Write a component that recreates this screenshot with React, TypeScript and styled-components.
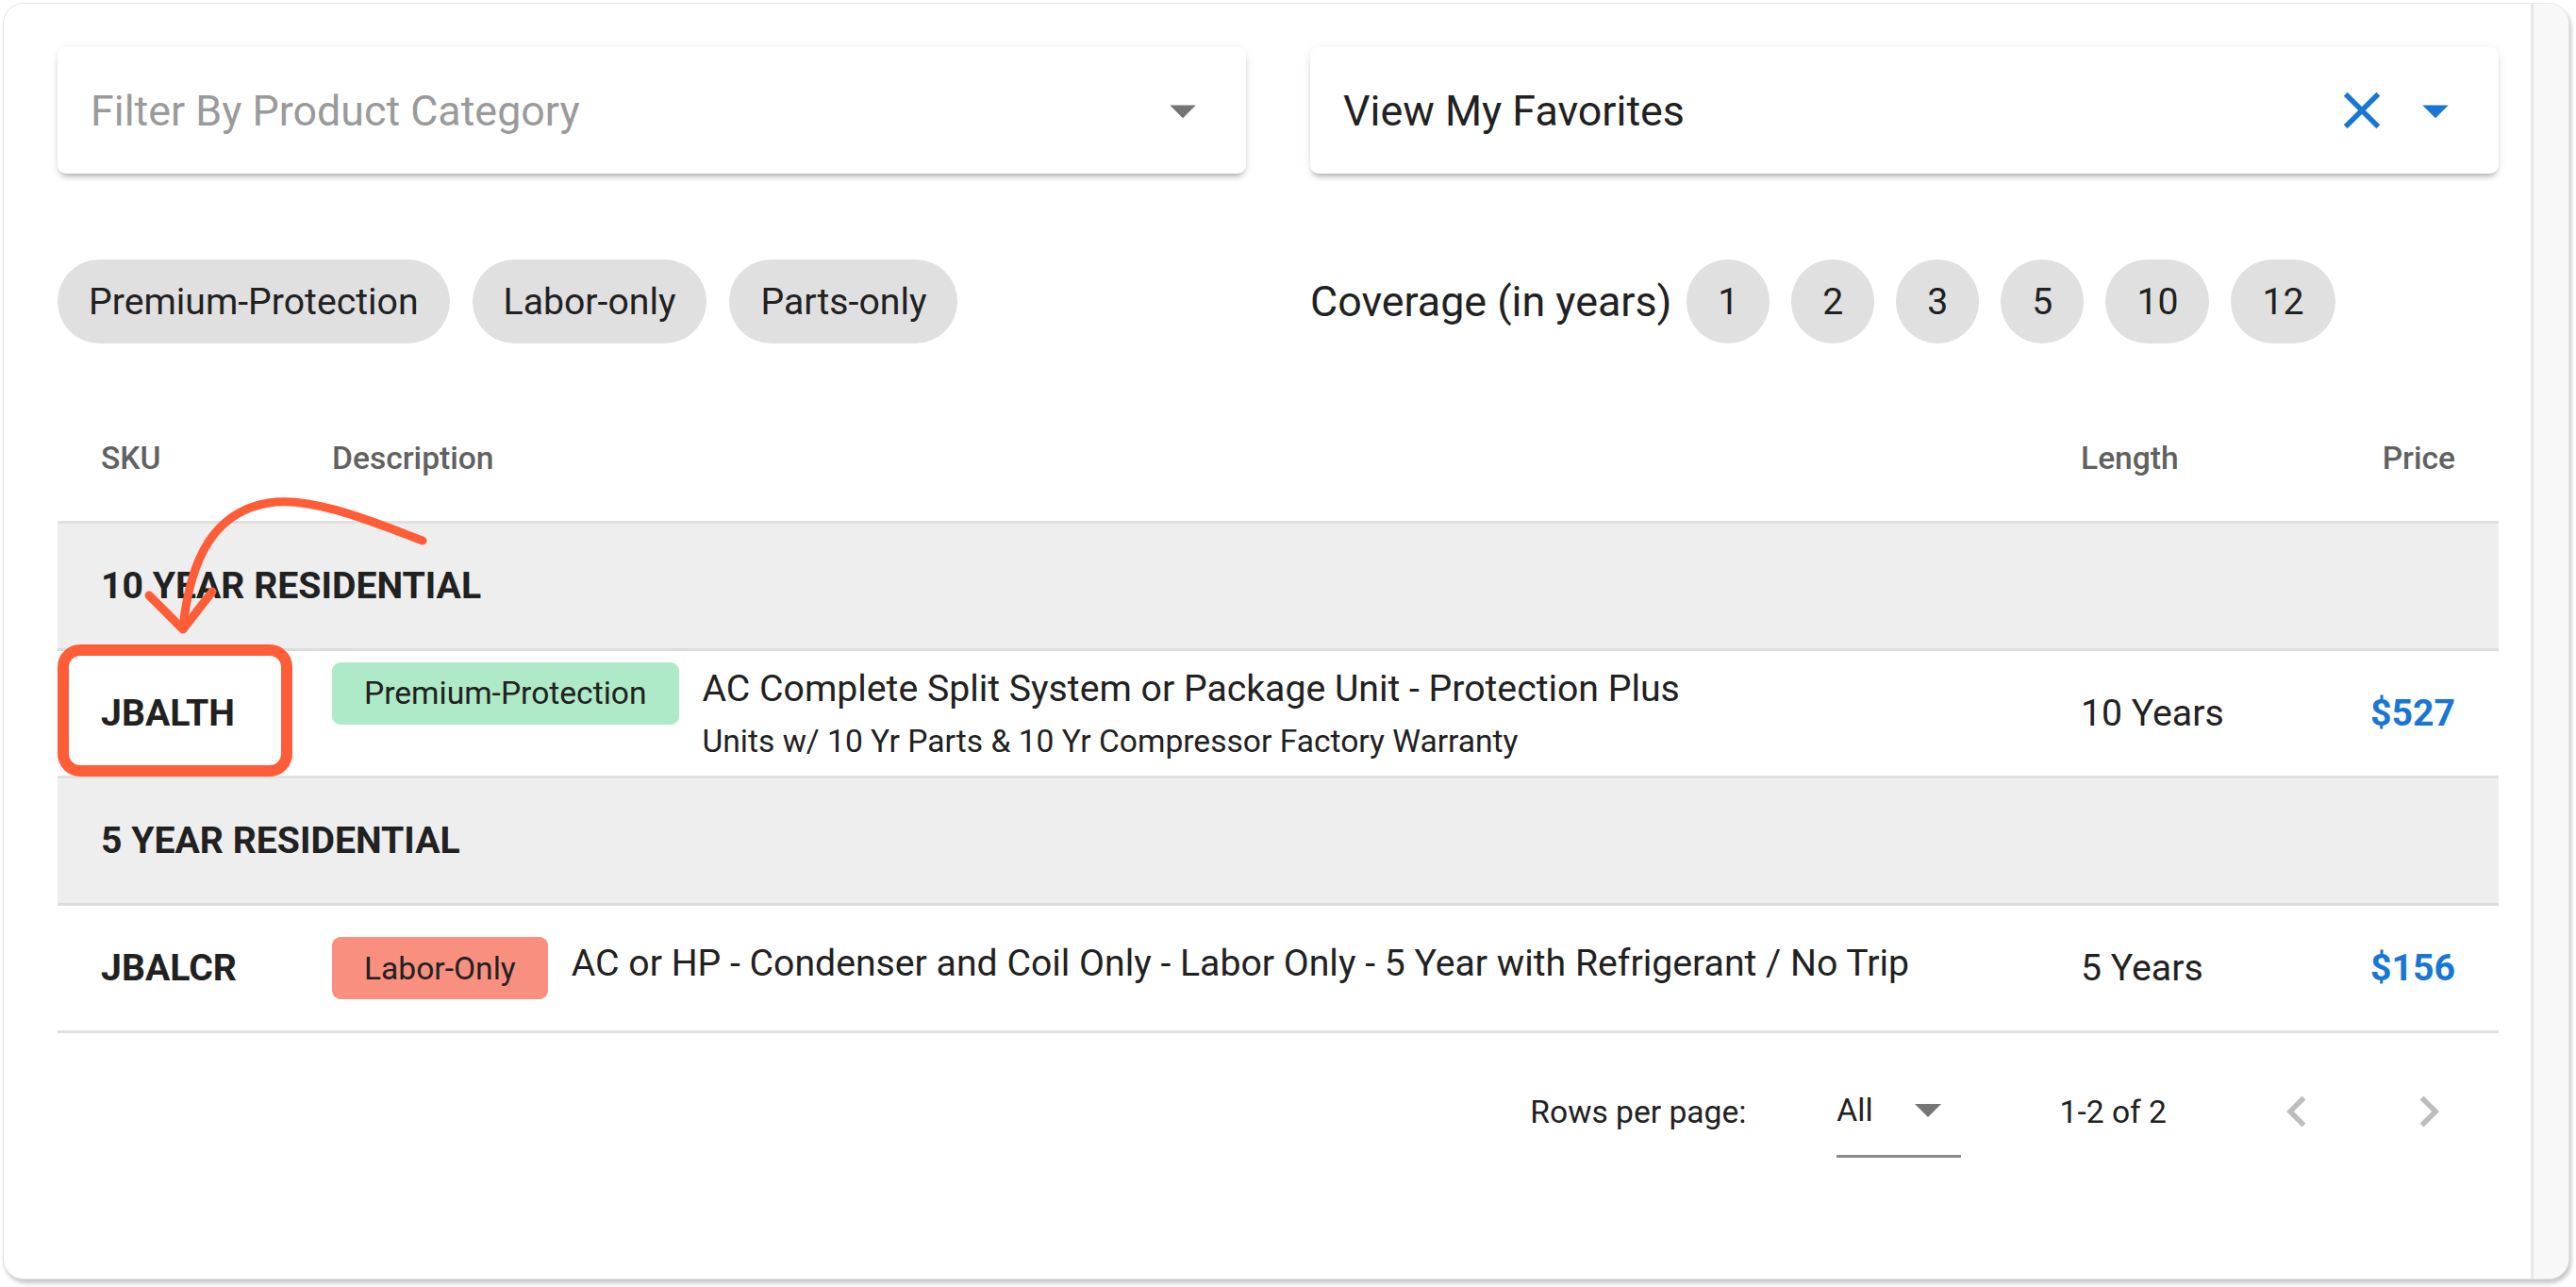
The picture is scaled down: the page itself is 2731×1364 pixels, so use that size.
import React from 'react';
import styled, { createGlobalStyle } from 'styled-components';

const GlobalStyle = createGlobalStyle`
  html, body { margin: 0; padding: 0; background: #fff; }
  body { font-family: Roboto, "Liberation Sans", Arial, sans-serif; color: #212121; }
  * { box-sizing: border-box; }
`;

const Page = styled.div`
  position: relative;
  width: 2731px;
  height: 1364px;
  padding: 3px 7px 0 3px;
`;

const Card = styled.div`
  display: flex;
  height: 1353px;
  border: 1px solid #e4e4e4;
  border-radius: 22px;
  box-shadow: 2px 4px 4px rgba(0, 0, 0, 0.22);
  overflow: hidden;
  background: #fff;
`;

const Content = styled.div`
  flex: 1;
  min-width: 0;
  padding: 46px 34px 0 57px;
  display: flex;
  flex-direction: column;
`;

const Track = styled.div`
  width: 40px;
  flex-shrink: 0;
  background: #f8f8f8;
  border-left: 3px solid #e8e8e8;
`;

const TwoCols = styled.div<{ $mt: number }>`
  display: grid;
  grid-template-columns: 1fr 1fr;
  column-gap: 68px;
  margin-top: ${(p) => p.$mt}px;
`;

const SelectBox = styled.div<{ $placeholder?: boolean }>`
  height: 134px;
  display: flex;
  align-items: center;
  padding: 0 34px 0 35px;
  background: #fff;
  border-radius: 9px;
  box-shadow: 0 5px 6px -3px rgba(0, 0, 0, 0.32), 0 2px 12px rgba(0, 0, 0, 0.08);
  font-size: 44.8px;
  color: ${(p) => (p.$placeholder ? '#9a9a9a' : '#212121')};
`;

const SelectText = styled.span`
  flex: 1;
  white-space: nowrap;
`;

const IconSvg = styled.svg<{ $color: string; $mr?: number }>`
  width: 66px;
  height: 66px;
  flex-shrink: 0;
  fill: ${(p) => p.$color};
  margin-right: ${(p) => p.$mr ?? 0}px;
`;

const ChipRow = styled.div<{ $gap: number }>`
  display: flex;
  align-items: center;
  gap: ${(p) => p.$gap}px;
`;

const Chip = styled.span`
  display: inline-flex;
  align-items: center;
  height: 89px;
  padding: 0 33px;
  border-radius: 45px;
  background: #e0e0e0;
  font-size: 39.2px;
  color: #212121;
  white-space: nowrap;
`;

const CoverageLabel = styled.span`
  font-size: 44.8px;
  color: #212121;
  margin-right: -7px;
  white-space: nowrap;
`;

const Table = styled.div`
  margin-top: 54px;
  display: flex;
  flex-direction: column;
`;

const gridCols = '245px 1fr 240px 157px';

const HeaderRow = styled.div`
  display: grid;
  grid-template-columns: ${gridCols};
  align-items: center;
  height: 137px;
  padding: 0 46px;
  border-bottom: 3px solid #e0e0e0;
`;

const HeadCell = styled.div<{ $right?: boolean }>`
  font-size: 33.6px;
  font-weight: 500;
  color: #616161;
  text-align: ${(p) => (p.$right ? 'right' : 'left')};
`;

const GroupRow = styled.div`
  display: flex;
  align-items: center;
  height: 135px;
  padding: 0 46px;
  background: #eeeeee;
  border-bottom: 3px solid #dcdcdc;
  font-size: 39.2px;
  font-weight: 700;
  color: #212121;
`;

const DataRow = styled.div`
  display: grid;
  grid-template-columns: ${gridCols};
  align-items: center;
  height: 135px;
  padding: 0 46px;
  border-bottom: 3px solid #e0e0e0;
  font-size: 39.2px;
  color: #212121;
`;

const Sku = styled.div`
  font-weight: 700;
`;

const DescCell = styled.div`
  display: flex;
  align-items: flex-start;
  gap: 25px;
`;

const Tag = styled.span<{ $bg: string }>`
  display: inline-flex;
  align-items: center;
  flex-shrink: 0;
  height: 66px;
  padding: 0 34px;
  border-radius: 9px;
  background: ${(p) => p.$bg};
  font-size: 33.6px;
  color: #212121;
  white-space: nowrap;
`;

const DescText = styled.div`
  display: flex;
  flex-direction: column;
`;

const DescTitle = styled.div`
  font-size: 39.2px;
  line-height: 56px;
  white-space: nowrap;
`;

const DescSub = styled.div`
  font-size: 33.6px;
  line-height: 50px;
  margin-top: 3px;
  white-space: nowrap;
`;

const Price = styled.div`
  text-align: right;
  font-weight: 700;
  color: #1976d2;
`;

const Pagination = styled.div`
  height: 166px;
  display: flex;
  align-items: center;
  justify-content: flex-end;
  padding-right: 41px;
  font-size: 33.6px;
  color: #212121;
`;

const PageSelect = styled.div`
  display: flex;
  align-items: center;
  margin-left: 96px;
  padding: 27px 21px 27px 0;
  line-height: 40px;
  border-bottom: 3px solid #8a8a8a;
`;

const SmallTriangle = styled.svg`
  width: 28px;
  height: 14px;
  margin-left: 44px;
  fill: #757575;
`;

const RangeText = styled.span`
  margin-left: 105px;
`;

const NavButton = styled.span<{ $ml: number }>`
  display: inline-flex;
  margin-left: ${(p) => p.$ml}px;
`;

const Overlay = styled.svg`
  position: absolute;
  left: 0;
  top: 0;
  width: 2731px;
  height: 1364px;
  pointer-events: none;
`;

const DropIcon = ({ color }: { color: string }) => (
  <IconSvg $color={color} viewBox="0 0 24 24">
    <path d="M7 10l5 5 5-5z" />
  </IconSvg>
);

const ClearIcon = ({ color }: { color: string }) => (
  <IconSvg $color={color} $mr={12} viewBox="0 0 24 24">
    <path d="M19 6.41L17.59 5 12 10.59 6.41 5 5 6.41 10.59 12 5 17.59 6.41 19 12 13.41 17.59 19 19 17.59 13.41 12z" />
  </IconSvg>
);

const ChevronLeft = () => (
  <IconSvg $color="#bdbdbd" viewBox="0 0 24 24">
    <path d="M15.41 16.59L10.83 12l4.58-4.59L14 6l-6 6 6 6 1.41-1.41z" />
  </IconSvg>
);

const ChevronRight = () => (
  <IconSvg $color="#bdbdbd" viewBox="0 0 24 24">
    <path d="M8.59 16.59L13.17 12 8.59 7.41 10 6l6 6-6 6-1.41-1.41z" />
  </IconSvg>
);

const typeChips = ['Premium-Protection', 'Labor-only', 'Parts-only'];
const years = ['1', '2', '3', '5', '10', '12'];

export default function App() {
  return (
    <>
      <GlobalStyle />
      <Page>
        <Card>
          <Content>
            <TwoCols $mt={0}>
              <SelectBox $placeholder>
                <SelectText>Filter By Product Category</SelectText>
                <DropIcon color="#757575" />
              </SelectBox>
              <SelectBox>
                <SelectText>View My Favorites</SelectText>
                <ClearIcon color="#1976d2" />
                <DropIcon color="#1976d2" />
              </SelectBox>
            </TwoCols>

            <TwoCols $mt={91}>
              <ChipRow $gap={24}>
                {typeChips.map((c) => (
                  <Chip key={c}>{c}</Chip>
                ))}
              </ChipRow>
              <ChipRow $gap={23}>
                <CoverageLabel>Coverage (in years)</CoverageLabel>
                {years.map((y) => (
                  <Chip key={y}>{y}</Chip>
                ))}
              </ChipRow>
            </TwoCols>

            <Table>
              <HeaderRow>
                <HeadCell>SKU</HeadCell>
                <HeadCell>Description</HeadCell>
                <HeadCell>Length</HeadCell>
                <HeadCell $right>Price</HeadCell>
              </HeaderRow>

              <GroupRow>10 YEAR RESIDENTIAL</GroupRow>
              <DataRow>
                <Sku>JBALTH</Sku>
                <DescCell>
                  <Tag $bg="#aeeac7">Premium-Protection</Tag>
                  <DescText>
                    <DescTitle>AC Complete Split System or Package Unit - Protection Plus</DescTitle>
                    <DescSub>Units w/ 10 Yr Parts &amp; 10 Yr Compressor Factory Warranty</DescSub>
                  </DescText>
                </DescCell>
                <div>10 Years</div>
                <Price>$527</Price>
              </DataRow>

              <GroupRow>5 YEAR RESIDENTIAL</GroupRow>
              <DataRow>
                <Sku>JBALCR</Sku>
                <DescCell>
                  <Tag $bg="#f98f7f">Labor-Only</Tag>
                  <DescText>
                    <DescTitle>AC or HP - Condenser and Coil Only - Labor Only - 5 Year with Refrigerant / No Trip</DescTitle>
                  </DescText>
                </DescCell>
                <div>5 Years</div>
                <Price>$156</Price>
              </DataRow>
            </Table>

            <Pagination>
              <span>Rows per page:</span>
              <PageSelect>
                <span>All</span>
                <SmallTriangle viewBox="7 10 10 5">
                  <path d="M7 10l5 5 5-5z" />
                </SmallTriangle>
              </PageSelect>
              <RangeText>1-2 of 2</RangeText>
              <NavButton $ml={105}>
                <ChevronLeft />
              </NavButton>
              <NavButton $ml={74}>
                <ChevronRight />
              </NavButton>
            </Pagination>
          </Content>
          <Track />
        </Card>

        <Overlay viewBox="0 0 2731 1364">
          <rect x="67" y="689" width="237" height="128" rx="18" ry="18" fill="none" stroke="#ff5c38" strokeWidth="12" />
          <path
            d="M448 573 C 400 555, 330 525, 285 533 C 228 542, 202 590, 194 665"
            fill="none"
            stroke="#ff5c38"
            strokeWidth="9"
            strokeLinecap="round"
          />
          <path
            d="M158 631 L 194 667 L 225 627"
            fill="none"
            stroke="#ff5c38"
            strokeWidth="9"
            strokeLinecap="round"
            strokeLinejoin="round"
          />
        </Overlay>
      </Page>
    </>
  );
}
